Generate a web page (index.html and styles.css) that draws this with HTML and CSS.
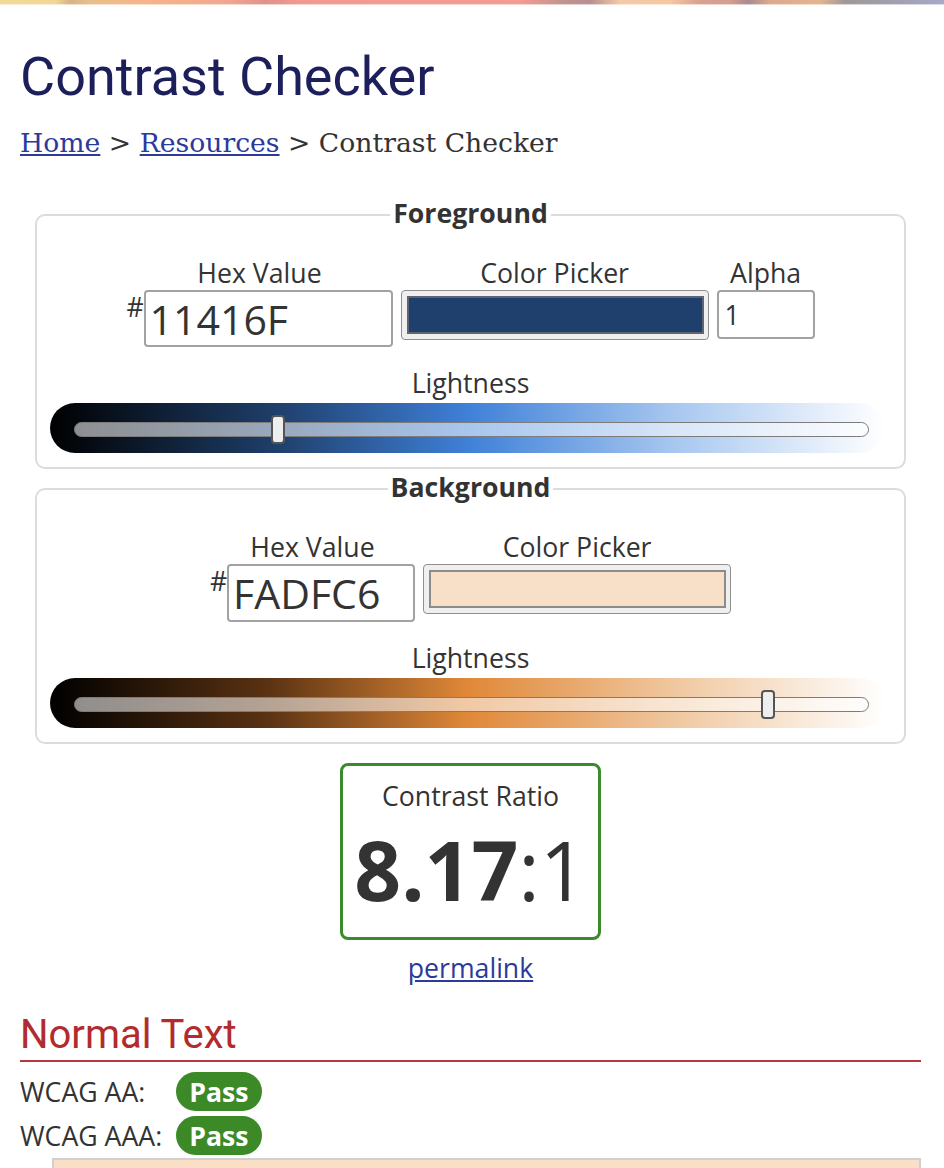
FILE: index.html
```html
<!DOCTYPE html>
<html lang="en">
<head>
<meta charset="utf-8">
<title>Contrast Checker</title>
<link rel="stylesheet" href="styles.css">
</head>
<body>
<div class="topbar"></div>
<main class="page">
  <h1 class="title">Contrast Checker</h1>
  <nav class="crumbs"><a href="#">Home</a> &gt; <a href="#">Resources</a> &gt; Contrast Checker</nav>

  <fieldset class="panel">
    <legend class="panel-title">Foreground</legend>
    <div class="controls">
      <div class="field">
        <span class="field-label">Hex Value</span>
        <div class="hex-row"><span class="hash">#</span><input class="hex-input hex-input--fg" type="text" value="11416F"></div>
      </div>
      <div class="field">
        <span class="field-label">Color Picker</span>
        <div class="picker"><div class="swatch swatch--fg"></div></div>
      </div>
      <div class="field">
        <span class="field-label">Alpha</span>
        <input class="alpha-input" type="text" value="1">
      </div>
    </div>
    <div class="slider-label">Lightness</div>
    <div class="slider slider--fg">
      <div class="track"><div class="thumb" style="left:25.6%"></div></div>
    </div>
  </fieldset>

  <fieldset class="panel">
    <legend class="panel-title">Background</legend>
    <div class="controls">
      <div class="field">
        <span class="field-label">Hex Value</span>
        <div class="hex-row"><span class="hash">#</span><input class="hex-input hex-input--bg" type="text" value="FADFC6"></div>
      </div>
      <div class="field">
        <span class="field-label">Color Picker</span>
        <div class="picker"><div class="swatch swatch--bg"></div></div>
      </div>
    </div>
    <div class="slider-label">Lightness</div>
    <div class="slider slider--bg">
      <div class="track"><div class="thumb" style="left:87.4%"></div></div>
    </div>
  </fieldset>

  <div class="ratio-box">
    <div class="ratio-label">Contrast Ratio</div>
    <div class="ratio-value"><b>8.17</b>:1</div>
  </div>
  <div class="permalink-row"><a href="#">permalink</a></div>

  <h2 class="section-title">Normal Text</h2>
  <div class="results">
    <span class="result-label">WCAG AA:</span><span class="badge">Pass</span>
    <span class="result-label">WCAG AAA:</span><span class="badge">Pass</span>
  </div>
  <div class="sample"></div>
</main>
</body>
</html>
```

FILE: styles.css
```css
html, body {
  margin: 0;
  padding: 0;
  background: #fff;
}

body {
  font-family: "Open Sans", "DejaVu Sans", sans-serif;
  font-size: 26.67px;
  color: #333;
}

.topbar {
  height: 5px;
  background:
    linear-gradient(to bottom, transparent 4px, rgba(255, 255, 255, 0.6) 4px),
    linear-gradient(to right,
      #f3d998 0px, #f2d796 55px, #d9b088 70px, #e8c08a 90px, #f5b68a 130px,
      #f5ae8a 190px, #f0a592 230px, #e0928a 265px, #f09a90 300px, #f29c92 520px,
      #c09290 565px, #b89090 590px, #f5c8a8 620px, #f5c8a0 670px, #d8a090 700px,
      #d69e90 730px, #a88a90 748px, #dcaa8c 770px, #e4b490 820px, #a09898 845px,
      #9e9ea8 880px, #a8a8c8 944px);
}

.page {
  padding: 0 23px 0 20px;
}

.title {
  margin: 40px 0 0;
  font-family: Roboto, "Liberation Sans", sans-serif;
  font-weight: 400;
  font-size: 54px;
  line-height: 64px;
  color: #1d1f5b;
}

.crumbs {
  margin-top: 16px;
  font-family: "DejaVu Serif", "Liberation Serif", serif;
  font-size: 26.67px;
  line-height: 36px;
  color: #333;
}

.crumbs a {
  color: #2b3a9b;
}

.panel {
  margin: 0 15px;
  padding: 20px 0 14px;
  border: 2px solid #dcdcdc;
  border-radius: 10px;
  min-inline-size: 0;
}

.panel:first-of-type {
  margin-top: 34px;
}

.panel-title {
  margin: 0 auto;
  padding: 0 3px 4px;
  font-weight: 700;
  font-size: 26.67px;
  line-height: 36px;
  color: #333;
}

.controls {
  display: flex;
  justify-content: center;
  align-items: flex-start;
  gap: 8px;
}

.field {
  display: flex;
  flex-direction: column;
  align-items: center;
}

.field-label {
  line-height: 35px;
}

.hex-row {
  display: flex;
  align-items: flex-start;
}

.hash {
  line-height: 36px;
  margin-top: -1px;
}

.hex-input {
  box-sizing: border-box;
  margin: 0;
  padding: 0 3px 0 4px;
  border: 2px solid #a2a2a2;
  border-radius: 4px;
  font-family: "Open Sans", sans-serif;
  font-size: 41px;
  color: #333;
  background: #fff;
  outline: none;
}

.hex-input--fg {
  width: 249px;
  height: 57px;
}

.hex-input--bg {
  width: 188px;
  height: 58px;
}

.picker {
  box-sizing: border-box;
  width: 308px;
  height: 50px;
  padding: 5px 4px 5px 5px;
  border: 1px solid #8f8f8f;
  border-radius: 4px;
  background: #efefef;
}

.swatch {
  box-sizing: border-box;
  height: 100%;
  border: 2px solid #747474;
}

.swatch--fg {
  background: #1f3f6c;
  border-color: #5d6574;
}

.swatch--bg {
  background: #f7dfc8;
  border-color: #8c8c8c;
}

.alpha-input {
  box-sizing: border-box;
  width: 98px;
  height: 49px;
  margin: 0;
  padding: 0 6px;
  border: 2px solid #a2a2a2;
  border-radius: 4px;
  font-family: "Open Sans", sans-serif;
  font-size: 26.67px;
  color: #333;
  background: #fff;
  outline: none;
}

.slider-label {
  margin-top: 18px;
  text-align: center;
  line-height: 35px;
}

.slider {
  box-sizing: border-box;
  height: 50px;
  margin: 3px 19px 0 13px;
  padding: 19px 16px 0 24px;
  border-radius: 25px;
}

.slider--fg {
  background: linear-gradient(to right, #000 0%, #1d3c66 26%, #3f80d8 50%, #a8c8f0 75%, #fff 100%);
}

.slider--bg {
  background: linear-gradient(to right, #000 0%, #5a3212 26%, #e08838 50%, #f0c8a0 75%, #fff 100%);
}

.track {
  position: relative;
  height: 15px;
  box-sizing: border-box;
  border: 1px solid #7c7c7c;
  border-radius: 8px;
  background: rgba(255, 255, 255, 0.55);
}

.thumb {
  position: absolute;
  top: -8px;
  width: 14px;
  height: 29px;
  box-sizing: border-box;
  transform: translateX(-50%);
  border: 2.5px solid #555;
  border-radius: 4px;
  background: #eee;
}

.ratio-box {
  box-sizing: border-box;
  width: 261px;
  margin: 19px auto 0;
  padding: 12px 0 20px;
  border: 3px solid #3b8a2b;
  border-radius: 8px;
  text-align: center;
}

.ratio-label {
  line-height: 36px;
}

.ratio-value {
  margin-top: 7px;
  font-size: 82px;
  line-height: 96px;
  font-weight: 400;
}

.ratio-value b {
  font-weight: 700;
}

.permalink-row {
  margin-top: 10px;
  text-align: center;
  line-height: 36px;
}

.permalink-row a {
  color: #2b3a9b;
}

.section-title {
  margin: 25px 0 0;
  padding-bottom: 1px;
  border-bottom: 2px solid #b5393c;
  font-family: Roboto, "Liberation Sans", sans-serif;
  font-weight: 400;
  font-size: 40px;
  line-height: 48px;
  color: #b22b2e;
}

.results {
  display: grid;
  grid-template-columns: auto auto;
  justify-content: start;
  align-items: center;
  column-gap: 14px;
  row-gap: 5px;
  margin-top: 10px;
}

.result-label {
  line-height: 39px;
}

.badge {
  justify-self: start;
  padding: 0 14px 0 13px;
  line-height: 39px;
  border-radius: 20px;
  background: #3b8a27;
  color: #fff;
  font-weight: 700;
}

.sample {
  height: 8px;
  margin: 3px 0 0 32px;
  border: 2px solid #d0d0d0;
  border-bottom: 0;
  background: #fadfc6;
}
```
